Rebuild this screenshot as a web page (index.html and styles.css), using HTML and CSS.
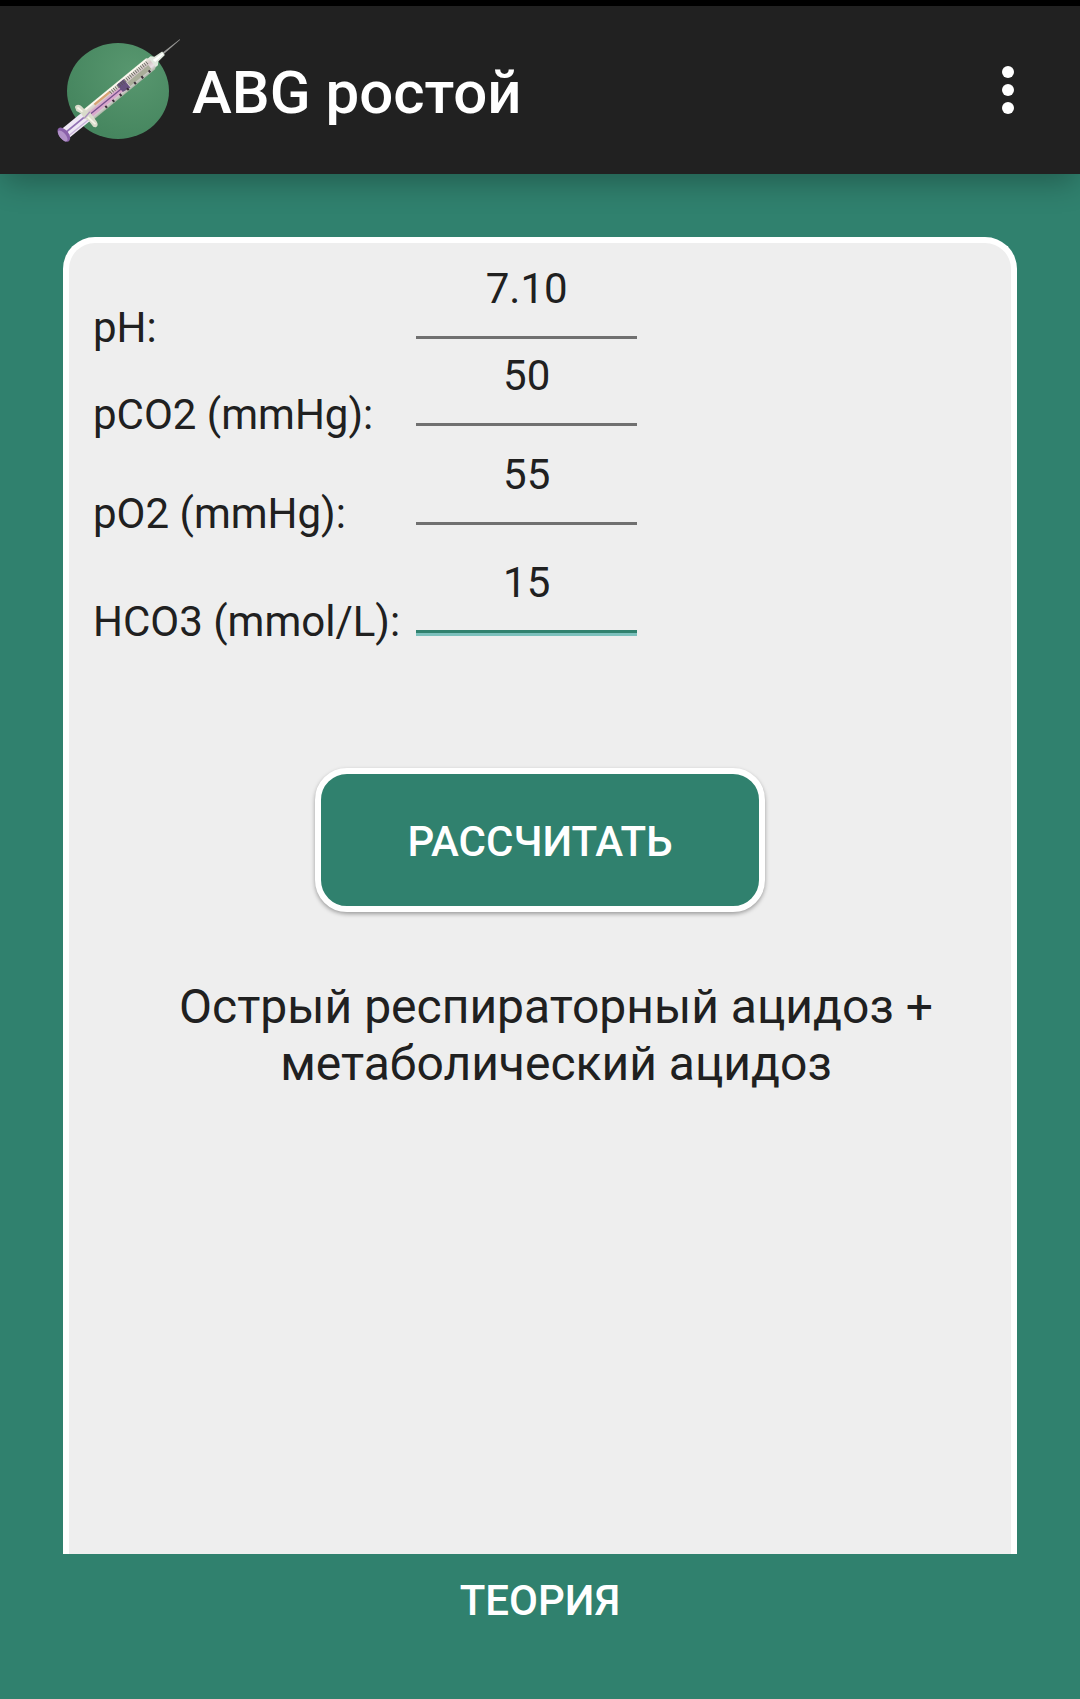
FILE: index.html
```html
<!DOCTYPE html>
<html lang="ru">
<head>
  <meta charset="utf-8">
  <meta name="viewport" content="width=device-width, initial-scale=1">
  <title>ABG ростой</title>
  <link rel="stylesheet" href="styles.css">
</head>
<body>
  <header class="app-bar">
    <svg class="logo" viewBox="0 0 432 420" aria-hidden="true">
      <defs>
        <radialGradient id="disc" cx="0.65" cy="0.3" r="0.7">
          <stop offset="0" stop-color="#58976f"/>
          <stop offset="1" stop-color="#46865f"/>
        </radialGradient>
        <linearGradient id="glass" x1="0" y1="0" x2="0" y2="1">
          <stop offset="0" stop-color="#eef0e2"/>
          <stop offset="0.4" stop-color="#d3c6c6"/>
          <stop offset="0.7" stop-color="#e9dfe6"/>
          <stop offset="1" stop-color="#a9b4a4"/>
        </linearGradient>
      </defs>
      <ellipse cx="234" cy="213" rx="153" ry="144" fill="url(#disc)"/>
      <g transform="translate(70 345) rotate(-39.3)">
        <!-- needle and hub -->
        <path d="M384-3L452-1V1L384 3Z" fill="#9a9a98"/>
        <path d="M336-17L352-17L360-9L388-6V7L360 10L352 18H336Z" fill="#dfe8dd"/>
        <path d="M350-4L386-2V3L352 5Z" fill="#fff"/>
        <!-- plunger rod -->
        <path d="M4-17H92V18H4Z" fill="#efe8f5"/>
        <path d="M4-4H92V1H4Z" fill="#9272b4"/>
        <path d="M4 10H92V14H4Z" fill="#c9b5db"/>
        <!-- barrel -->
        <path d="M86-21H338L344-14V16L338 22H86Z" fill="url(#glass)"/>
        <path d="M92-4H232V13H92Z" fill="#d9a9cc"/>
        <path d="M92 1H236V5H92Z" fill="#76518e"/>
        <path d="M130-17H190V-8H130Z" fill="#d8a375"/>
        <path d="M220-16L246-18V17L220 13Z" fill="#67517f"/>
        <path d="M248-1H330V14H248Z" fill="#a9ad99"/>
        <path d="M100-17H334" stroke="#fffdf3" stroke-width="4"/>
        <path d="M190-9H332" stroke="#55564d" stroke-width="11" stroke-dasharray="2 5"/>
        <path d="M150 16H330" stroke="#3a2f39" stroke-width="8" stroke-dasharray="6 22"/>
        <!-- finger flange -->
        <path d="M80-43C89-48 97-40 97-30L98-16L105 0L103 32C101 46 90 48 85 38L86 16L80 0L82-16L76-31Z" fill="#d9dccb"/>
        <path d="M85-37L89-18M91 4L95 36" stroke="#f7f5ea" stroke-width="5"/>
        <path d="M80 1L105-3" stroke="#a78abc" stroke-width="4"/>
        <!-- thumb rest -->
        <ellipse cx="2" cy="0" rx="14" ry="25" fill="#8b62aa"/>
        <ellipse cx="-3" cy="1" rx="9" ry="20" fill="#b292c8"/>
      </g>
    </svg>
    <h1 class="title">ABG ростой</h1>
    <button class="menu-button" type="button" aria-label="Меню">
      <svg class="dots" viewBox="0 0 12 48" aria-hidden="true">
        <circle cx="6" cy="6" r="6"/>
        <circle cx="6" cy="24" r="6"/>
        <circle cx="6" cy="42" r="6"/>
      </svg>
    </button>
  </header>

  <main class="card">
    <form class="abg-form">
      <div class="fields">
        <label for="ph">pH:</label>
        <input type="text" inputmode="decimal" id="ph" value="7.10">
        <label for="pco2">pCO2 (mmHg):</label>
        <input type="text" inputmode="decimal" id="pco2" value="50">
        <label for="po2">pO2 (mmHg):</label>
        <input type="text" inputmode="decimal" id="po2" value="55">
        <label for="hco3">HCO3 (mmol/L):</label>
        <input type="text" inputmode="decimal" id="hco3" class="active" value="15">
      </div>
      <button class="calculate" type="button">РАССЧИТАТЬ</button>
    </form>
    <p class="result">Острый респираторный ацидоз + метаболический ацидоз</p>
  </main>

  <footer class="bottom-bar">
    <button class="theory" type="button">ТЕОРИЯ</button>
  </footer>
</body>
</html>
```
FILE: styles.css
```css
* {
  box-sizing: border-box;
}

body {
  margin: 0;
  min-height: 100vh;
  display: flex;
  flex-direction: column;
  background-color: #30816e;
  color: #202020;
  font-family: Roboto, sans-serif;
  font-size: 42px;
}

button,
input {
  font: inherit;
  color: inherit;
  border: none;
  background: none;
}

button {
  cursor: pointer;
}

.app-bar {
  position: relative;
  z-index: 1;
  display: flex;
  align-items: center;
  padding: 14px 48px 14px 40px;
  border-top: 6px solid #000;
  background-color: #212121;
  color: #fff;
  box-shadow: 0 12px 28px -4px rgba(0, 0, 0, 0.28);
}

.logo {
  width: 144px;
  height: 140px;
  margin-right: 8px;
}

.title {
  flex: 1;
  margin: 0;
  padding-top: 6px;
  font-size: 60px;
  font-weight: 500;
  line-height: 70px;
}

.menu-button {
  display: flex;
  padding: 12px 18px;
}

.dots {
  width: 12px;
  height: 48px;
  fill: #fff;
}

.card {
  flex: 1;
  margin: 63px 63px 0;
  padding: 21px 24px;
  border: 6px solid #fff;
  border-bottom: none;
  border-radius: 32px 32px 0 0;
  background-color: #eee;
}

.abg-form {
  display: flex;
  flex-direction: column;
}

.fields {
  display: grid;
  grid-template-columns: max-content 221px;
  grid-template-rows: 87px 87px 99px 108px;
  column-gap: 16px;
  align-items: end;
}

.fields label {
  line-height: 47px;
}

.fields input {
  width: 100%;
  height: 75px;
  margin: 0 0 12px;
  padding: 0 0 23px;
  border-bottom: 3px solid #707070;
  border-radius: 0;
  line-height: 49px;
  text-align: center;
  outline: none;
}

.fields input:focus,
.fields input.active {
  border-bottom-color: #30816e;
  box-shadow: 0 3px 0 #7cc0bc;
}

.calculate {
  align-self: center;
  width: 450px;
  max-width: 100%;
  height: 144px;
  margin-top: 123px;
  padding: 2px 0 0;
  border: 6px solid #fff;
  border-radius: 32px;
  background-color: #30816e;
  color: #fff;
  font-weight: 500;
  box-shadow: 0 2px 4px rgba(0, 0, 0, 0.35);
}

.result {
  margin: 66px 0 0;
  padding-left: 32px;
  font-size: 48px;
  line-height: 57px;
  text-align: center;
}

.bottom-bar {
  display: flex;
  justify-content: center;
  padding: 22px 0 74px;
}

.theory {
  padding: 0;
  color: #fff;
  font-weight: 500;
  line-height: 49px;
}
```
